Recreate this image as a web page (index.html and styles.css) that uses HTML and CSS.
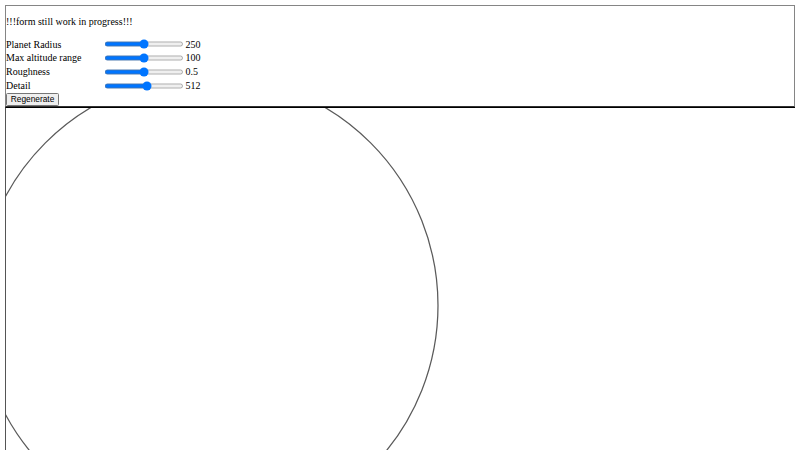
FILE: index.html
```html
<!DOCTYPE html>
<html lang="en">
<head>
<meta charset="utf-8">
<title>Planet generator</title>
<link rel="stylesheet" href="styles.css">
</head>
<body>
<div class="panel">
  <p class="notice">!!!form still work in progress!!!</p>
  <div class="row"><span class="label">Planet Radius</span><input class="slider" type="range" min="0" max="500" value="250"><span class="value">250</span></div>
  <div class="row"><span class="label">Max altitude range</span><input class="slider" type="range" min="0" max="200" value="100"><span class="value">100</span></div>
  <div class="row"><span class="label">Roughness</span><input class="slider" type="range" min="0" max="1" step="0.01" value="0.5"><span class="value">0.5</span></div>
  <div class="row"><span class="label">Detail</span><input class="slider" type="range" min="64" max="896" value="512"><span class="value">512</span></div>
  <button class="regen" type="button">Regenerate</button>
</div>
<div class="canvas">
  <svg class="planet" viewBox="0 0 789 343" preserveAspectRatio="xMinYMin slice">
    <circle cx="202" cy="197.5" r="230" fill="none" stroke="#5a5a5a" stroke-width="1.25"/>
  </svg>
</div>
</body>
</html>
```
FILE: styles.css
```css
html {
  height: 100%;
}
body {
  margin: 5px 5px 0;
  height: calc(100% - 5px);
  display: flex;
  flex-direction: column;
  font-family: "Liberation Serif", "Times New Roman", serif;
  font-size: 10px;
  color: #000;
  background: #fff;
  overflow: hidden;
}
.panel {
  flex: none;
  border: 1px solid #858585;
  border-bottom-color: #333;
}
.notice {
  margin: 10px 0;
  line-height: 11.5px;
}
.row {
  display: flex;
  align-items: center;
  height: 13.75px;
  line-height: 13.75px;
}
.label {
  width: 96.25px;
  flex: none;
}
.slider {
  zoom: 0.625;
  width: 129px;
  margin: 2px;
  flex: none;
}
.value {
  flex: none;
}
.regen {
  zoom: 0.625;
  display: block;
  font-family: "Liberation Sans", Arial, sans-serif;
  font-size: 13.333px;
  margin: 0;
}
.canvas {
  flex: 1;
  min-height: 0;
  width: 789px;
  border-top: 1px solid #000;
  border-left: 1px solid #555;
  border-right: 1px solid #8a8a8a;
  overflow: hidden;
}
.planet {
  display: block;
  width: 789px;
  height: 100%;
}
```
